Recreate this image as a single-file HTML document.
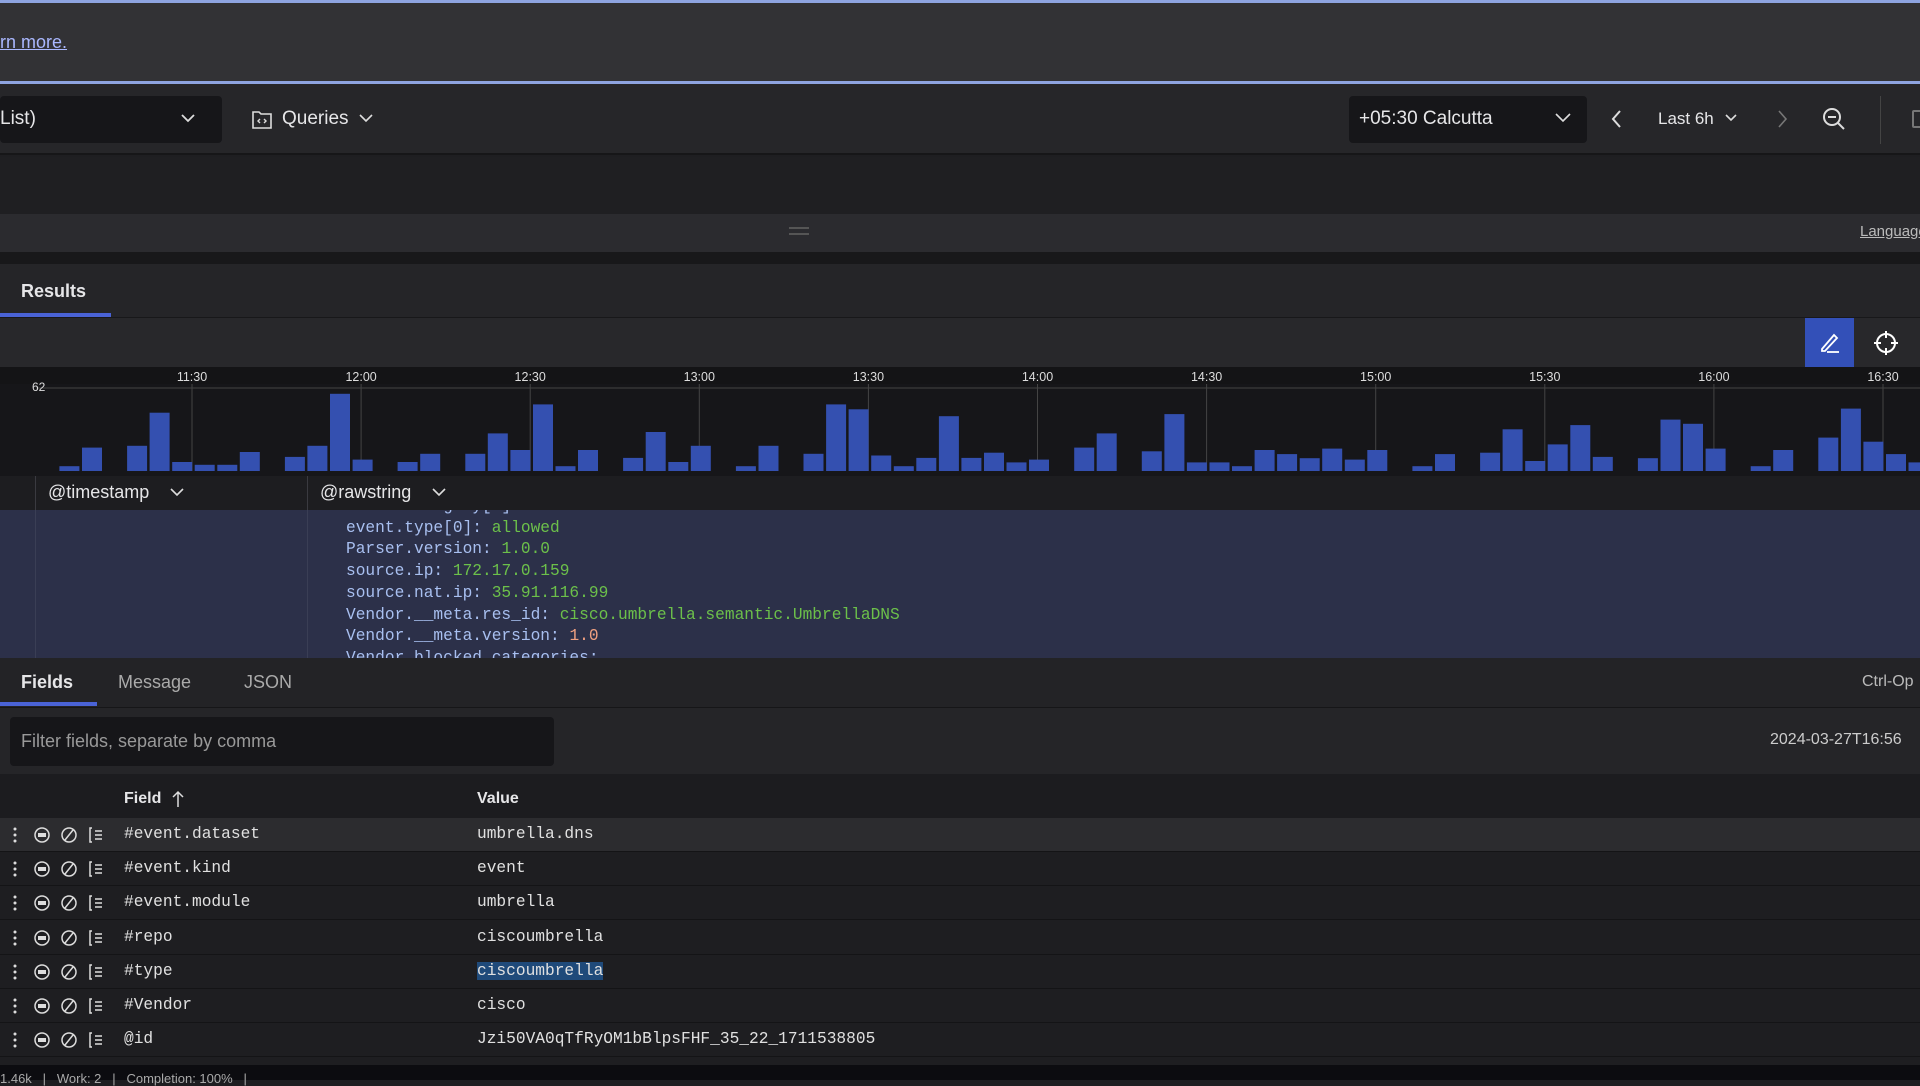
<!DOCTYPE html>
<html><head><meta charset="utf-8">
<style>
*{margin:0;padding:0;box-sizing:border-box}
body{width:1920px;height:1080px;overflow:hidden;background:#1e1e21;font-family:"Liberation Sans",sans-serif;color:#e6e6e8;position:relative}
.a{position:absolute}
.mono{font-family:"Liberation Mono",monospace}
.k{color:#a8bff0}.g{color:#6cc04a}.o{color:#f0a080}
</style></head><body>
<div class="a" style="left:0;top:0;width:1920px;height:84px;background:#323235;border-top:3px solid #8ea4e0"></div>
<div class="a" style="left:0;top:81px;width:1920px;height:3px;background:#8ea4e0"></div>
<div class="a" style="left:0;top:32px;font-size:18px;color:#aab8ff;text-decoration:underline">rn more.</div>

<div class="a" style="left:0;top:84px;width:1920px;height:71px;background:#262629;border-bottom:2px solid #161618"></div>
<div class="a" style="left:0;top:96px;width:222px;height:47px;background:#161619;border-radius:4px"></div>
<div class="a" style="left:0;top:108px;font-size:19px">List)</div>
<svg class="a" style="left:180px;top:112px" width="16" height="12"><path d="M2 3l6 6 6-6" stroke="#ddd" stroke-width="1.8" fill="none"/></svg>
<svg class="a" style="left:251px;top:108px" width="22" height="22"><path d="M2 4h6l2 2h10v14H2z" stroke="#ddd" stroke-width="1.6" fill="none"/><path d="M9 11l-2 2 2 2M13 11l2 2-2 2" stroke="#ddd" stroke-width="1.4" fill="none"/></svg>
<div class="a" style="left:282px;top:108px;font-size:19px">Queries</div>
<svg class="a" style="left:358px;top:112px" width="16" height="12"><path d="M2 3l6 6 6-6" stroke="#ddd" stroke-width="1.6" fill="none"/></svg>

<div class="a" style="left:1349px;top:96px;width:238px;height:47px;background:#161619;border-radius:4px"></div>
<div class="a" style="left:1359px;top:108px;font-size:19px">+05:30 Calcutta</div>
<svg class="a" style="left:1554px;top:112px" width="18" height="12"><path d="M2 2l7 7 7-7" stroke="#ddd" stroke-width="1.6" fill="none"/></svg>
<svg class="a" style="left:1610px;top:108px" width="14" height="22"><path d="M10 3L3 11l7 8" stroke="#ddd" stroke-width="2" fill="none"/></svg>
<div class="a" style="left:1658px;top:109px;font-size:17px">Last 6h</div>
<svg class="a" style="left:1724px;top:113px" width="14" height="10"><path d="M2 2l5 5 5-5" stroke="#ddd" stroke-width="1.6" fill="none"/></svg>
<svg class="a" style="left:1775px;top:108px" width="14" height="22"><path d="M4 3l7 8-7 8" stroke="#777" stroke-width="1.6" fill="none"/></svg>
<svg class="a" style="left:1821px;top:106px" width="26" height="26"><circle cx="11" cy="11" r="8" stroke="#ddd" stroke-width="2" fill="none"/><path d="M7 11h8M17 17l6 6" stroke="#ddd" stroke-width="2"/></svg>
<div class="a" style="left:1880px;top:96px;width:1px;height:48px;background:#444"></div>
<div class="a" style="left:1912px;top:110px;width:10px;height:18px;border:2px solid #777;border-radius:2px"></div>

<div class="a" style="left:0;top:157px;width:1920px;height:57px;background:#1f1f22"></div>
<div class="a" style="left:0;top:214px;width:1920px;height:38px;background:#2b2b2f"></div>
<div class="a" style="left:789px;top:227px;width:20px;height:2px;background:#555"></div>
<div class="a" style="left:789px;top:233px;width:20px;height:2px;background:#555"></div>
<div class="a" style="left:1860px;top:223px;font-size:15px;color:#bbb;text-decoration:underline">Language</div>
<div class="a" style="left:0;top:252px;width:1920px;height:12px;background:#18181a"></div>

<div class="a" style="left:0;top:264px;width:1920px;height:54px;background:#252528;border-bottom:1px solid #18181a"></div>
<div class="a" style="left:21px;top:281px;font-size:18px;font-weight:bold">Results</div>
<div class="a" style="left:0;top:313px;width:111px;height:4px;background:#4a63d6"></div>
<div class="a" style="left:0;top:318px;width:1920px;height:49px;background:#28282b"></div>
<div class="a" style="left:1805px;top:318px;width:49px;height:49px;background:#3350b8"></div>
<svg class="a" style="left:1817px;top:330px" width="26" height="26"><path d="M5 19L17 5l3 3L8 21H5z" stroke="#fff" stroke-width="1.8" fill="none"/><path d="M10 22h12" stroke="#fff" stroke-width="1.8"/></svg>
<svg class="a" style="left:1871px;top:328px" width="30" height="30"><circle cx="15" cy="15" r="9" stroke="#fff" stroke-width="2" fill="none"/><path d="M15 3v7M15 20v7M3 15h7M20 15h7" stroke="#fff" stroke-width="2"/></svg>

<svg class="a" style="left:0;top:367px" width="1920" height="109" id="ch">
<rect width="1920" height="109" fill="#161619"/>
<rect x="0" y="0" width="1920" height="17" fill="#141416"/>
<line x1="36" y1="21" x2="1920" y2="21" stroke="#444" stroke-width="1"/>
<text x="32" y="24" fill="#ddd" font-size="12" font-family="Liberation Sans">62</text>
</svg>

<div class="a" style="left:0;top:476px;width:1920px;height:34px;background:#1d1d20"></div>
<div class="a" style="left:35px;top:476px;width:1px;height:182px;background:#3a3a40"></div>
<div class="a" style="left:307px;top:476px;width:1px;height:182px;background:#3a3a40"></div>
<div class="a" style="left:48px;top:482px;font-size:18px">@timestamp</div>
<svg class="a" style="left:169px;top:487px" width="16" height="12"><path d="M2 2l6 6 6-6" stroke="#ddd" stroke-width="1.6" fill="none"/></svg>
<div class="a" style="left:320px;top:482px;font-size:18px">@rawstring</div>
<svg class="a" style="left:431px;top:487px" width="16" height="12"><path d="M2 2l6 6 6-6" stroke="#ddd" stroke-width="1.6" fill="none"/></svg>
<div class="a" style="left:0;top:510px;width:1920px;height:148px;background:#2c3049;overflow:hidden">
 <div class="a" style="left:35px;top:0;width:1px;height:148px;background:#3a3e55"></div>
 <div class="a" style="left:307px;top:0;width:1px;height:148px;background:#3a3e55"></div>
 <div class="a mono" style="left:346px;top:-14px;font-size:16.2px;line-height:21.7px;white-space:pre"><span class="k">event.category[0]:</span> <span class="g">network</span>
<span class="k">event.type[0]:</span> <span class="g">allowed</span>
<span class="k">Parser.version:</span> <span class="g">1.0.0</span>
<span class="k">source.ip:</span> <span class="g">172.17.0.159</span>
<span class="k">source.nat.ip:</span> <span class="g">35.91.116.99</span>
<span class="k">Vendor.__meta.res_id:</span> <span class="g">cisco.umbrella.semantic.UmbrellaDNS</span>
<span class="k">Vendor.__meta.version:</span> <span class="o">1.0</span>
<span class="k">Vendor.blocked_categories:</span></div>
</div>

<div class="a" style="left:0;top:658px;width:1920px;height:50px;background:#232326;border-bottom:1px solid #161618"></div>
<div class="a" style="left:21px;top:672px;font-size:18px;font-weight:bold">Fields</div>
<div class="a" style="left:118px;top:672px;font-size:18px;color:#aaa">Message</div>
<div class="a" style="left:244px;top:672px;font-size:18px;color:#aaa">JSON</div>
<div class="a" style="left:0;top:702px;width:97px;height:4px;background:#4a63d6"></div>
<div class="a" style="left:1862px;top:673px;font-size:16px;color:#bbb">Ctrl-Op</div>
<div class="a" style="left:0;top:708px;width:1920px;height:66px;background:#252528"></div>
<div class="a" style="left:10px;top:717px;width:544px;height:49px;background:#161619;border-radius:4px"></div>
<div class="a" style="left:21px;top:731px;font-size:18px;color:#999">Filter fields, separate by comma</div>
<div class="a" style="left:1770px;top:731px;font-size:16px;color:#ccc">2024-03-27T16:56</div>
<div class="a" style="left:0;top:774px;width:1920px;height:44px;background:#1c1c1f"></div>
<div class="a" style="left:124px;top:790px;font-size:16px;font-weight:bold">Field</div>
<svg class="a" style="left:171px;top:790px" width="14" height="18"><path d="M7 17V2M2 7l5-5 5 5" stroke="#ddd" stroke-width="1.5" fill="none"/></svg>
<div class="a" style="left:477px;top:790px;font-size:16px;font-weight:bold">Value</div>
<div id="rows"></div>
<div class="a" style="left:0;top:1065px;width:1920px;height:15px;background:#0c0c10"></div>
<div class="a" style="left:0;top:1071px;font-size:13px;color:#aaa;white-space:pre">1.46k   |   Work: 2   |   Completion: 100%   |</div>
<script>
var t1=[1352,1298,0,1293,1197,1340,1348,1348,1311,0,1325,1293,1142,1333,0,1340,1316,0,1316,1257,1305,1173,1352,1305,0,1328,1253,1340,1293,0,1352,1293,0,1316,1173,1187,1321,1352,1328,1207];
var t2=[1328,1313,1341,1333,0,1298,1257,0,1309,1201,1341,1341,1352,1305,1317,1329,1301,1333,1305,0,1352,1317,0,1313,1245,1337,1289,1233,1325,0,1329,1217,1229,1301,0,1352,1305,0,1269,1185,1281,1317,1341];
var all=t1.concat(t2),s='',ch=document.getElementById('ch');
var lbl=['11:30','12:00','12:30','13:00','13:30','14:00','14:30','15:00','15:30','16:00','16:30'];
lbl.forEach(function(l,i){var x=192+i*169.1;s+='<line x1="'+x+'" y1="17" x2="'+x+'" y2="104" stroke="#444"/><text x="'+x+'" y="14" fill="#ddd" font-size="12.5" text-anchor="middle" font-family="Liberation Sans">'+l+'</text>';});
all.forEach(function(t,i){if(!t)return;var h=(1366-t)/2.9;var x=59.4+i*22.55;s+='<rect x="'+x.toFixed(1)+'" y="'+(104-h).toFixed(1)+'" width="20" height="'+h.toFixed(1)+'" fill="#3450b0"/>';});
ch.insertAdjacentHTML('beforeend',s);
var rows=[['#event.dataset','umbrella.dns'],['#event.kind','event'],['#event.module','umbrella'],['#repo','ciscoumbrella'],['#type','ciscoumbrella'],['#Vendor','cisco'],['@id','Jzi50VA0qTfRyOM1bBlpsFHF_35_22_1711538805']];
var h='';
rows.forEach(function(r,i){var y=818+i*34.2;var bg=i==0?'#2c2c2f':'#1e1e21';
var v=i==4?'<span style="background:#1f4a7a">'+r[1]+'</span>':r[1];
h+='<div class="a" style="left:0;top:'+y+'px;width:1920px;height:34px;background:'+bg+';border-bottom:1px solid #141416"></div>';
h+='<svg class="a" style="left:8px;top:'+(y+7)+'px" width="110" height="20"><circle cx="7" cy="4" r="1.5" fill="#ddd"/><circle cx="7" cy="10" r="1.5" fill="#ddd"/><circle cx="7" cy="16" r="1.5" fill="#ddd"/><circle cx="34" cy="10" r="7" stroke="#ddd" stroke-width="1.5" fill="none"/><rect x="30" y="8" width="8" height="4" fill="#ddd"/><circle cx="61" cy="10" r="7" stroke="#ddd" stroke-width="1.5" fill="none"/><path d="M57 15l8-10" stroke="#ddd" stroke-width="1.5"/><path d="M84 3h-2v14h2" stroke="#ddd" stroke-width="1.5" fill="none"/><path d="M87 6h7M87 10h7M87 14h7" stroke="#ddd" stroke-width="1.5"/></svg>';
h+='<div class="a mono" style="left:124px;top:'+(y+7)+'px;font-size:16.2px;color:#e0e0e0">'+r[0]+'</div>';
h+='<div class="a mono" style="left:477px;top:'+(y+7)+'px;font-size:16.2px;color:#e0e0e0">'+v+'</div>';});
document.getElementById('rows').innerHTML=h;
</script>
</body></html>
